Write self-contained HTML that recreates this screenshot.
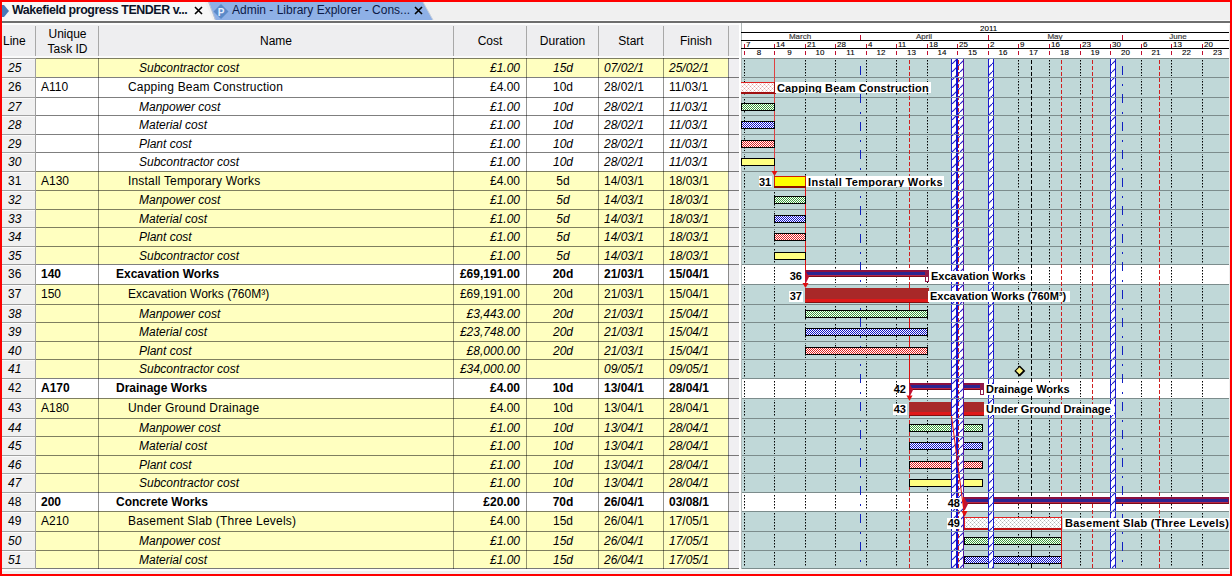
<!DOCTYPE html>
<html><head><meta charset="utf-8"><style>
*{margin:0;padding:0;box-sizing:border-box}
html,body{width:1232px;height:576px;overflow:hidden;background:#ff0000}
body{position:relative;font-family:"Liberation Sans",sans-serif;font-size:12px;color:#000}
.a{position:absolute}
.t{position:absolute;white-space:nowrap;line-height:14px;height:14px}
.i{font-style:italic}
.b{font-weight:bold}
.r{text-align:right}
.c{text-align:center}
.gl{position:absolute;background:#fff;font-weight:bold;font-size:11px;line-height:11px;height:11px;overflow:hidden;white-space:nowrap;color:#000}
.gh{position:absolute;font-size:8px;line-height:8px;white-space:nowrap;color:#000;-webkit-text-stroke:0.1px #000;font-family:"Liberation Sans",sans-serif}
</style></head><body>

<div class="a" style="left:2px;top:2px;width:1228px;height:572px;background:#f0f0f0"></div>
<div class="a" style="left:2px;top:2px;width:1228px;height:18px;background:#f0f0f0"></div>
<svg class="a" style="left:0;top:0" width="460" height="24" viewBox="0 0 460 24">
<polygon points="2,2 205,2 213,20 2,20" fill="#f7f7f7"/>
<polygon points="209,2 423,2 433,20 215,20" fill="#8eb0e6"/>
<line x1="208.5" y1="2" x2="215.5" y2="20" stroke="#b8c4d4" stroke-width="1"/>
<line x1="423" y1="2" x2="433" y2="20" stroke="#c8d0dc" stroke-width="1"/>
<polygon points="2,5 4,5 9,11 4,17 2,17" fill="#4a78b8"/>
<polygon points="221,4 228.5,11.5 221,19 213.5,11.5" fill="#5b8ac8"/>
<text x="221" y="15.5" font-family="Liberation Sans" font-size="10" font-weight="bold" fill="#e8f0ff" text-anchor="middle">P</text>
<path d="M195,7 L202,14 M202,7 L195,14" stroke="#000" stroke-width="1.6"/>
<path d="M415,7 L422,14 M422,7 L415,14" stroke="#000" stroke-width="1.6"/>
</svg>
<div class="t b" style="left:12px;top:3px;font-size:12.4px;letter-spacing:-0.42px;color:#0c1428">Wakefield progress TENDER v...</div>
<div class="t" style="left:232px;top:3px;font-size:12px;color:#0c1a48">Admin - Library Explorer - Cons...</div>
<div class="a" style="left:2px;top:20px;width:1228px;height:1px;background:#fafafa"></div>
<div class="a" style="left:2px;top:21px;width:1228px;height:2px;background:#6e6e6e"></div>
<div class="a" style="left:2px;top:23px;width:1228px;height:2px;background:#fcfcfc"></div>
<div class="a" style="left:2px;top:25px;width:737px;height:31px;background:#eeeef0"></div>
<div class="a" style="left:2px;top:56px;width:737px;height:2px;background:#fafafa"></div>
<div class="a" style="left:35px;top:26px;width:1px;height:30px;background:#a8a8a8"></div>
<div class="a" style="left:98px;top:26px;width:1px;height:30px;background:#a8a8a8"></div>
<div class="a" style="left:453px;top:26px;width:1px;height:30px;background:#a8a8a8"></div>
<div class="a" style="left:526px;top:26px;width:1px;height:30px;background:#a8a8a8"></div>
<div class="a" style="left:598px;top:26px;width:1px;height:30px;background:#a8a8a8"></div>
<div class="a" style="left:663px;top:26px;width:1px;height:30px;background:#a8a8a8"></div>
<div class="a" style="left:728px;top:26px;width:1px;height:30px;background:#a8a8a8"></div>
<div class="t" style="left:3px;top:34px">Line</div>
<div class="t c" style="left:37px;width:61px;top:27px">Unique</div>
<div class="t c" style="left:37px;width:61px;top:42px">Task ID</div>
<div class="t c" style="left:99px;width:354px;top:34px">Name</div>
<div class="t c" style="left:454px;width:72px;top:34px">Cost</div>
<div class="t c" style="left:527px;width:71px;top:34px">Duration</div>
<div class="t c" style="left:599px;width:64px;top:34px">Start</div>
<div class="t c" style="left:664px;width:64px;top:34px">Finish</div>
<div class="a" style="left:2px;top:58px;width:33px;height:19px;background:#f0f0f0"></div>
<div class="a" style="left:2px;top:59px;width:33px;height:1px;background:#fafafa"></div>
<div class="a" style="left:36px;top:58px;width:692px;height:19px;background:#ffffc0"></div>
<div class="a" style="left:729px;top:58px;width:10px;height:19px;background:#f0eff2"></div>
<div class="t i" style="left:8px;top:61px">25</div>
<div class="t i" style="left:139px;top:61px;letter-spacing:0px">Subcontractor cost</div>
<div class="t r i" style="left:454px;width:66px;top:61px">£1.00</div>
<div class="t c i" style="left:527px;width:72px;top:61px">15d</div>
<div class="t i" style="left:604px;top:61px">07/02/1</div>
<div class="t i" style="left:669px;top:61px">25/02/1</div>
<div class="a" style="left:2px;top:77px;width:33px;height:20px;background:#f0f0f0"></div>
<div class="a" style="left:2px;top:78px;width:33px;height:1px;background:#fafafa"></div>
<div class="a" style="left:36px;top:77px;width:692px;height:20px;background:#ffffff"></div>
<div class="a" style="left:729px;top:77px;width:10px;height:20px;background:#f0eff2"></div>
<div class="t " style="left:8px;top:80px">26</div>
<div class="t " style="left:41px;top:80px">A110</div>
<div class="t " style="left:128px;top:80px;letter-spacing:0.2px">Capping Beam Construction</div>
<div class="t r " style="left:454px;width:66px;top:80px">£4.00</div>
<div class="t c " style="left:527px;width:72px;top:80px">10d</div>
<div class="t " style="left:604px;top:80px">28/02/1</div>
<div class="t " style="left:669px;top:80px">11/03/1</div>
<div class="a" style="left:2px;top:97px;width:33px;height:18px;background:#f0f0f0"></div>
<div class="a" style="left:2px;top:98px;width:33px;height:1px;background:#fafafa"></div>
<div class="a" style="left:36px;top:97px;width:692px;height:18px;background:#ffffff"></div>
<div class="a" style="left:729px;top:97px;width:10px;height:18px;background:#f0eff2"></div>
<div class="t i" style="left:8px;top:100px">27</div>
<div class="t i" style="left:139px;top:100px;letter-spacing:0px">Manpower cost</div>
<div class="t r i" style="left:454px;width:66px;top:100px">£1.00</div>
<div class="t c i" style="left:527px;width:72px;top:100px">10d</div>
<div class="t i" style="left:604px;top:100px">28/02/1</div>
<div class="t i" style="left:669px;top:100px">11/03/1</div>
<div class="a" style="left:2px;top:115px;width:33px;height:19px;background:#f0f0f0"></div>
<div class="a" style="left:2px;top:116px;width:33px;height:1px;background:#fafafa"></div>
<div class="a" style="left:36px;top:115px;width:692px;height:19px;background:#ffffff"></div>
<div class="a" style="left:729px;top:115px;width:10px;height:19px;background:#f0eff2"></div>
<div class="t i" style="left:8px;top:118px">28</div>
<div class="t i" style="left:139px;top:118px;letter-spacing:0px">Material cost</div>
<div class="t r i" style="left:454px;width:66px;top:118px">£1.00</div>
<div class="t c i" style="left:527px;width:72px;top:118px">10d</div>
<div class="t i" style="left:604px;top:118px">28/02/1</div>
<div class="t i" style="left:669px;top:118px">11/03/1</div>
<div class="a" style="left:2px;top:134px;width:33px;height:18px;background:#f0f0f0"></div>
<div class="a" style="left:2px;top:135px;width:33px;height:1px;background:#fafafa"></div>
<div class="a" style="left:36px;top:134px;width:692px;height:18px;background:#ffffff"></div>
<div class="a" style="left:729px;top:134px;width:10px;height:18px;background:#f0eff2"></div>
<div class="t i" style="left:8px;top:137px">29</div>
<div class="t i" style="left:139px;top:137px;letter-spacing:0px">Plant cost</div>
<div class="t r i" style="left:454px;width:66px;top:137px">£1.00</div>
<div class="t c i" style="left:527px;width:72px;top:137px">10d</div>
<div class="t i" style="left:604px;top:137px">28/02/1</div>
<div class="t i" style="left:669px;top:137px">11/03/1</div>
<div class="a" style="left:2px;top:152px;width:33px;height:19px;background:#f0f0f0"></div>
<div class="a" style="left:2px;top:153px;width:33px;height:1px;background:#fafafa"></div>
<div class="a" style="left:36px;top:152px;width:692px;height:19px;background:#ffffff"></div>
<div class="a" style="left:729px;top:152px;width:10px;height:19px;background:#f0eff2"></div>
<div class="t i" style="left:8px;top:155px">30</div>
<div class="t i" style="left:139px;top:155px;letter-spacing:0px">Subcontractor cost</div>
<div class="t r i" style="left:454px;width:66px;top:155px">£1.00</div>
<div class="t c i" style="left:527px;width:72px;top:155px">10d</div>
<div class="t i" style="left:604px;top:155px">28/02/1</div>
<div class="t i" style="left:669px;top:155px">11/03/1</div>
<div class="a" style="left:2px;top:171px;width:33px;height:19px;background:#f0f0f0"></div>
<div class="a" style="left:2px;top:172px;width:33px;height:1px;background:#fafafa"></div>
<div class="a" style="left:36px;top:171px;width:692px;height:19px;background:#ffffc0"></div>
<div class="a" style="left:729px;top:171px;width:10px;height:19px;background:#f0eff2"></div>
<div class="t " style="left:8px;top:174px">31</div>
<div class="t " style="left:41px;top:174px">A130</div>
<div class="t " style="left:128px;top:174px;letter-spacing:0.18px">Install Temporary Works</div>
<div class="t r " style="left:454px;width:66px;top:174px">£4.00</div>
<div class="t c " style="left:527px;width:72px;top:174px">5d</div>
<div class="t " style="left:604px;top:174px">14/03/1</div>
<div class="t " style="left:669px;top:174px">18/03/1</div>
<div class="a" style="left:2px;top:190px;width:33px;height:19px;background:#f0f0f0"></div>
<div class="a" style="left:2px;top:191px;width:33px;height:1px;background:#fafafa"></div>
<div class="a" style="left:36px;top:190px;width:692px;height:19px;background:#ffffc0"></div>
<div class="a" style="left:729px;top:190px;width:10px;height:19px;background:#f0eff2"></div>
<div class="t i" style="left:8px;top:193px">32</div>
<div class="t i" style="left:139px;top:193px;letter-spacing:0px">Manpower cost</div>
<div class="t r i" style="left:454px;width:66px;top:193px">£1.00</div>
<div class="t c i" style="left:527px;width:72px;top:193px">5d</div>
<div class="t i" style="left:604px;top:193px">14/03/1</div>
<div class="t i" style="left:669px;top:193px">18/03/1</div>
<div class="a" style="left:2px;top:209px;width:33px;height:18px;background:#f0f0f0"></div>
<div class="a" style="left:2px;top:210px;width:33px;height:1px;background:#fafafa"></div>
<div class="a" style="left:36px;top:209px;width:692px;height:18px;background:#ffffc0"></div>
<div class="a" style="left:729px;top:209px;width:10px;height:18px;background:#f0eff2"></div>
<div class="t i" style="left:8px;top:212px">33</div>
<div class="t i" style="left:139px;top:212px;letter-spacing:0px">Material cost</div>
<div class="t r i" style="left:454px;width:66px;top:212px">£1.00</div>
<div class="t c i" style="left:527px;width:72px;top:212px">5d</div>
<div class="t i" style="left:604px;top:212px">14/03/1</div>
<div class="t i" style="left:669px;top:212px">18/03/1</div>
<div class="a" style="left:2px;top:227px;width:33px;height:19px;background:#f0f0f0"></div>
<div class="a" style="left:2px;top:228px;width:33px;height:1px;background:#fafafa"></div>
<div class="a" style="left:36px;top:227px;width:692px;height:19px;background:#ffffc0"></div>
<div class="a" style="left:729px;top:227px;width:10px;height:19px;background:#f0eff2"></div>
<div class="t i" style="left:8px;top:230px">34</div>
<div class="t i" style="left:139px;top:230px;letter-spacing:0px">Plant cost</div>
<div class="t r i" style="left:454px;width:66px;top:230px">£1.00</div>
<div class="t c i" style="left:527px;width:72px;top:230px">5d</div>
<div class="t i" style="left:604px;top:230px">14/03/1</div>
<div class="t i" style="left:669px;top:230px">18/03/1</div>
<div class="a" style="left:2px;top:246px;width:33px;height:18px;background:#f0f0f0"></div>
<div class="a" style="left:2px;top:247px;width:33px;height:1px;background:#fafafa"></div>
<div class="a" style="left:36px;top:246px;width:692px;height:18px;background:#ffffc0"></div>
<div class="a" style="left:729px;top:246px;width:10px;height:18px;background:#f0eff2"></div>
<div class="t i" style="left:8px;top:249px">35</div>
<div class="t i" style="left:139px;top:249px;letter-spacing:0px">Subcontractor cost</div>
<div class="t r i" style="left:454px;width:66px;top:249px">£1.00</div>
<div class="t c i" style="left:527px;width:72px;top:249px">5d</div>
<div class="t i" style="left:604px;top:249px">14/03/1</div>
<div class="t i" style="left:669px;top:249px">18/03/1</div>
<div class="a" style="left:2px;top:264px;width:33px;height:20px;background:#f0f0f0"></div>
<div class="a" style="left:2px;top:265px;width:33px;height:1px;background:#fafafa"></div>
<div class="a" style="left:36px;top:264px;width:692px;height:20px;background:#ffffff"></div>
<div class="a" style="left:729px;top:264px;width:10px;height:20px;background:#f0eff2"></div>
<div class="t " style="left:8px;top:267px">36</div>
<div class="t b" style="left:41px;top:267px">140</div>
<div class="t b" style="left:116px;top:267px;letter-spacing:0px">Excavation Works</div>
<div class="t r b" style="left:454px;width:66px;top:267px">£69,191.00</div>
<div class="t c b" style="left:527px;width:72px;top:267px">20d</div>
<div class="t b" style="left:604px;top:267px">21/03/1</div>
<div class="t b" style="left:669px;top:267px">15/04/1</div>
<div class="a" style="left:2px;top:284px;width:33px;height:20px;background:#f0f0f0"></div>
<div class="a" style="left:2px;top:285px;width:33px;height:1px;background:#fafafa"></div>
<div class="a" style="left:36px;top:284px;width:692px;height:20px;background:#ffffc0"></div>
<div class="a" style="left:729px;top:284px;width:10px;height:20px;background:#f0eff2"></div>
<div class="t " style="left:8px;top:287px">37</div>
<div class="t " style="left:41px;top:287px">150</div>
<div class="t " style="left:128px;top:287px;letter-spacing:0px">Excavation Works (760M³)</div>
<div class="t r " style="left:454px;width:66px;top:287px">£69,191.00</div>
<div class="t c " style="left:527px;width:72px;top:287px">20d</div>
<div class="t " style="left:604px;top:287px">21/03/1</div>
<div class="t " style="left:669px;top:287px">15/04/1</div>
<div class="a" style="left:2px;top:304px;width:33px;height:18px;background:#f0f0f0"></div>
<div class="a" style="left:2px;top:305px;width:33px;height:1px;background:#fafafa"></div>
<div class="a" style="left:36px;top:304px;width:692px;height:18px;background:#ffffc0"></div>
<div class="a" style="left:729px;top:304px;width:10px;height:18px;background:#f0eff2"></div>
<div class="t i" style="left:8px;top:307px">38</div>
<div class="t i" style="left:139px;top:307px;letter-spacing:0px">Manpower cost</div>
<div class="t r i" style="left:454px;width:66px;top:307px">£3,443.00</div>
<div class="t c i" style="left:527px;width:72px;top:307px">20d</div>
<div class="t i" style="left:604px;top:307px">21/03/1</div>
<div class="t i" style="left:669px;top:307px">15/04/1</div>
<div class="a" style="left:2px;top:322px;width:33px;height:19px;background:#f0f0f0"></div>
<div class="a" style="left:2px;top:323px;width:33px;height:1px;background:#fafafa"></div>
<div class="a" style="left:36px;top:322px;width:692px;height:19px;background:#ffffc0"></div>
<div class="a" style="left:729px;top:322px;width:10px;height:19px;background:#f0eff2"></div>
<div class="t i" style="left:8px;top:325px">39</div>
<div class="t i" style="left:139px;top:325px;letter-spacing:0px">Material cost</div>
<div class="t r i" style="left:454px;width:66px;top:325px">£23,748.00</div>
<div class="t c i" style="left:527px;width:72px;top:325px">20d</div>
<div class="t i" style="left:604px;top:325px">21/03/1</div>
<div class="t i" style="left:669px;top:325px">15/04/1</div>
<div class="a" style="left:2px;top:341px;width:33px;height:18px;background:#f0f0f0"></div>
<div class="a" style="left:2px;top:342px;width:33px;height:1px;background:#fafafa"></div>
<div class="a" style="left:36px;top:341px;width:692px;height:18px;background:#ffffc0"></div>
<div class="a" style="left:729px;top:341px;width:10px;height:18px;background:#f0eff2"></div>
<div class="t i" style="left:8px;top:344px">40</div>
<div class="t i" style="left:139px;top:344px;letter-spacing:0px">Plant cost</div>
<div class="t r i" style="left:454px;width:66px;top:344px">£8,000.00</div>
<div class="t c i" style="left:527px;width:72px;top:344px">20d</div>
<div class="t i" style="left:604px;top:344px">21/03/1</div>
<div class="t i" style="left:669px;top:344px">15/04/1</div>
<div class="a" style="left:2px;top:359px;width:33px;height:19px;background:#f0f0f0"></div>
<div class="a" style="left:2px;top:360px;width:33px;height:1px;background:#fafafa"></div>
<div class="a" style="left:36px;top:359px;width:692px;height:19px;background:#ffffc0"></div>
<div class="a" style="left:729px;top:359px;width:10px;height:19px;background:#f0eff2"></div>
<div class="t i" style="left:8px;top:362px">41</div>
<div class="t i" style="left:139px;top:362px;letter-spacing:0px">Subcontractor cost</div>
<div class="t r i" style="left:454px;width:66px;top:362px">£34,000.00</div>
<div class="t i" style="left:604px;top:362px">09/05/1</div>
<div class="t i" style="left:669px;top:362px">09/05/1</div>
<div class="a" style="left:2px;top:378px;width:33px;height:20px;background:#f0f0f0"></div>
<div class="a" style="left:2px;top:379px;width:33px;height:1px;background:#fafafa"></div>
<div class="a" style="left:36px;top:378px;width:692px;height:20px;background:#ffffff"></div>
<div class="a" style="left:729px;top:378px;width:10px;height:20px;background:#f0eff2"></div>
<div class="t " style="left:8px;top:381px">42</div>
<div class="t b" style="left:41px;top:381px">A170</div>
<div class="t b" style="left:116px;top:381px;letter-spacing:0px">Drainage Works</div>
<div class="t r b" style="left:454px;width:66px;top:381px">£4.00</div>
<div class="t c b" style="left:527px;width:72px;top:381px">10d</div>
<div class="t b" style="left:604px;top:381px">13/04/1</div>
<div class="t b" style="left:669px;top:381px">28/04/1</div>
<div class="a" style="left:2px;top:398px;width:33px;height:20px;background:#f0f0f0"></div>
<div class="a" style="left:2px;top:399px;width:33px;height:1px;background:#fafafa"></div>
<div class="a" style="left:36px;top:398px;width:692px;height:20px;background:#ffffc0"></div>
<div class="a" style="left:729px;top:398px;width:10px;height:20px;background:#f0eff2"></div>
<div class="t " style="left:8px;top:401px">43</div>
<div class="t " style="left:41px;top:401px">A180</div>
<div class="t " style="left:128px;top:401px;letter-spacing:0.15px">Under Ground Drainage</div>
<div class="t r " style="left:454px;width:66px;top:401px">£4.00</div>
<div class="t c " style="left:527px;width:72px;top:401px">10d</div>
<div class="t " style="left:604px;top:401px">13/04/1</div>
<div class="t " style="left:669px;top:401px">28/04/1</div>
<div class="a" style="left:2px;top:418px;width:33px;height:18px;background:#f0f0f0"></div>
<div class="a" style="left:2px;top:419px;width:33px;height:1px;background:#fafafa"></div>
<div class="a" style="left:36px;top:418px;width:692px;height:18px;background:#ffffc0"></div>
<div class="a" style="left:729px;top:418px;width:10px;height:18px;background:#f0eff2"></div>
<div class="t i" style="left:8px;top:421px">44</div>
<div class="t i" style="left:139px;top:421px;letter-spacing:0px">Manpower cost</div>
<div class="t r i" style="left:454px;width:66px;top:421px">£1.00</div>
<div class="t c i" style="left:527px;width:72px;top:421px">10d</div>
<div class="t i" style="left:604px;top:421px">13/04/1</div>
<div class="t i" style="left:669px;top:421px">28/04/1</div>
<div class="a" style="left:2px;top:436px;width:33px;height:19px;background:#f0f0f0"></div>
<div class="a" style="left:2px;top:437px;width:33px;height:1px;background:#fafafa"></div>
<div class="a" style="left:36px;top:436px;width:692px;height:19px;background:#ffffc0"></div>
<div class="a" style="left:729px;top:436px;width:10px;height:19px;background:#f0eff2"></div>
<div class="t i" style="left:8px;top:439px">45</div>
<div class="t i" style="left:139px;top:439px;letter-spacing:0px">Material cost</div>
<div class="t r i" style="left:454px;width:66px;top:439px">£1.00</div>
<div class="t c i" style="left:527px;width:72px;top:439px">10d</div>
<div class="t i" style="left:604px;top:439px">13/04/1</div>
<div class="t i" style="left:669px;top:439px">28/04/1</div>
<div class="a" style="left:2px;top:455px;width:33px;height:18px;background:#f0f0f0"></div>
<div class="a" style="left:2px;top:456px;width:33px;height:1px;background:#fafafa"></div>
<div class="a" style="left:36px;top:455px;width:692px;height:18px;background:#ffffc0"></div>
<div class="a" style="left:729px;top:455px;width:10px;height:18px;background:#f0eff2"></div>
<div class="t i" style="left:8px;top:458px">46</div>
<div class="t i" style="left:139px;top:458px;letter-spacing:0px">Plant cost</div>
<div class="t r i" style="left:454px;width:66px;top:458px">£1.00</div>
<div class="t c i" style="left:527px;width:72px;top:458px">10d</div>
<div class="t i" style="left:604px;top:458px">13/04/1</div>
<div class="t i" style="left:669px;top:458px">28/04/1</div>
<div class="a" style="left:2px;top:473px;width:33px;height:19px;background:#f0f0f0"></div>
<div class="a" style="left:2px;top:474px;width:33px;height:1px;background:#fafafa"></div>
<div class="a" style="left:36px;top:473px;width:692px;height:19px;background:#ffffc0"></div>
<div class="a" style="left:729px;top:473px;width:10px;height:19px;background:#f0eff2"></div>
<div class="t i" style="left:8px;top:476px">47</div>
<div class="t i" style="left:139px;top:476px;letter-spacing:0px">Subcontractor cost</div>
<div class="t r i" style="left:454px;width:66px;top:476px">£1.00</div>
<div class="t c i" style="left:527px;width:72px;top:476px">10d</div>
<div class="t i" style="left:604px;top:476px">13/04/1</div>
<div class="t i" style="left:669px;top:476px">28/04/1</div>
<div class="a" style="left:2px;top:492px;width:33px;height:19px;background:#f0f0f0"></div>
<div class="a" style="left:2px;top:493px;width:33px;height:1px;background:#fafafa"></div>
<div class="a" style="left:36px;top:492px;width:692px;height:19px;background:#ffffff"></div>
<div class="a" style="left:729px;top:492px;width:10px;height:19px;background:#f0eff2"></div>
<div class="t " style="left:8px;top:495px">48</div>
<div class="t b" style="left:41px;top:495px">200</div>
<div class="t b" style="left:116px;top:495px;letter-spacing:0px">Concrete Works</div>
<div class="t r b" style="left:454px;width:66px;top:495px">£20.00</div>
<div class="t c b" style="left:527px;width:72px;top:495px">70d</div>
<div class="t b" style="left:604px;top:495px">26/04/1</div>
<div class="t b" style="left:669px;top:495px">03/08/1</div>
<div class="a" style="left:2px;top:511px;width:33px;height:20px;background:#f0f0f0"></div>
<div class="a" style="left:2px;top:512px;width:33px;height:1px;background:#fafafa"></div>
<div class="a" style="left:36px;top:511px;width:692px;height:20px;background:#ffffc0"></div>
<div class="a" style="left:729px;top:511px;width:10px;height:20px;background:#f0eff2"></div>
<div class="t " style="left:8px;top:514px">49</div>
<div class="t " style="left:41px;top:514px">A210</div>
<div class="t " style="left:128px;top:514px;letter-spacing:0.22px">Basement Slab (Three Levels)</div>
<div class="t r " style="left:454px;width:66px;top:514px">£4.00</div>
<div class="t c " style="left:527px;width:72px;top:514px">15d</div>
<div class="t " style="left:604px;top:514px">26/04/1</div>
<div class="t " style="left:669px;top:514px">17/05/1</div>
<div class="a" style="left:2px;top:531px;width:33px;height:19px;background:#f0f0f0"></div>
<div class="a" style="left:2px;top:532px;width:33px;height:1px;background:#fafafa"></div>
<div class="a" style="left:36px;top:531px;width:692px;height:19px;background:#ffffc0"></div>
<div class="a" style="left:729px;top:531px;width:10px;height:19px;background:#f0eff2"></div>
<div class="t i" style="left:8px;top:534px">50</div>
<div class="t i" style="left:139px;top:534px;letter-spacing:0px">Manpower cost</div>
<div class="t r i" style="left:454px;width:66px;top:534px">£1.00</div>
<div class="t c i" style="left:527px;width:72px;top:534px">15d</div>
<div class="t i" style="left:604px;top:534px">26/04/1</div>
<div class="t i" style="left:669px;top:534px">17/05/1</div>
<div class="a" style="left:2px;top:550px;width:33px;height:18px;background:#f0f0f0"></div>
<div class="a" style="left:2px;top:551px;width:33px;height:1px;background:#fafafa"></div>
<div class="a" style="left:36px;top:550px;width:692px;height:18px;background:#ffffc0"></div>
<div class="a" style="left:729px;top:550px;width:10px;height:18px;background:#f0eff2"></div>
<div class="t i" style="left:8px;top:553px">51</div>
<div class="t i" style="left:139px;top:553px;letter-spacing:0px">Material cost</div>
<div class="t r i" style="left:454px;width:66px;top:553px">£1.00</div>
<div class="t c i" style="left:527px;width:72px;top:553px">15d</div>
<div class="t i" style="left:604px;top:553px">26/04/1</div>
<div class="t i" style="left:669px;top:553px">17/05/1</div>
<div class="a" style="left:2px;top:58px;width:33px;height:1px;background:#a0a0a0"></div>
<div class="a" style="left:36px;top:58px;width:703px;height:1px;background:rgba(0,0,0,0.5)"></div>
<div class="a" style="left:2px;top:77px;width:33px;height:1px;background:#a0a0a0"></div>
<div class="a" style="left:36px;top:77px;width:703px;height:1px;background:rgba(0,0,0,0.5)"></div>
<div class="a" style="left:2px;top:97px;width:33px;height:1px;background:#a0a0a0"></div>
<div class="a" style="left:36px;top:97px;width:703px;height:1px;background:rgba(0,0,0,0.5)"></div>
<div class="a" style="left:2px;top:115px;width:33px;height:1px;background:#a0a0a0"></div>
<div class="a" style="left:36px;top:115px;width:703px;height:1px;background:rgba(0,0,0,0.5)"></div>
<div class="a" style="left:2px;top:134px;width:33px;height:1px;background:#a0a0a0"></div>
<div class="a" style="left:36px;top:134px;width:703px;height:1px;background:rgba(0,0,0,0.5)"></div>
<div class="a" style="left:2px;top:152px;width:33px;height:1px;background:#a0a0a0"></div>
<div class="a" style="left:36px;top:152px;width:703px;height:1px;background:rgba(0,0,0,0.5)"></div>
<div class="a" style="left:2px;top:171px;width:33px;height:1px;background:#a0a0a0"></div>
<div class="a" style="left:36px;top:171px;width:703px;height:1px;background:rgba(0,0,0,0.5)"></div>
<div class="a" style="left:2px;top:190px;width:33px;height:1px;background:#a0a0a0"></div>
<div class="a" style="left:36px;top:190px;width:703px;height:1px;background:rgba(0,0,0,0.5)"></div>
<div class="a" style="left:2px;top:209px;width:33px;height:1px;background:#a0a0a0"></div>
<div class="a" style="left:36px;top:209px;width:703px;height:1px;background:rgba(0,0,0,0.5)"></div>
<div class="a" style="left:2px;top:227px;width:33px;height:1px;background:#a0a0a0"></div>
<div class="a" style="left:36px;top:227px;width:703px;height:1px;background:rgba(0,0,0,0.5)"></div>
<div class="a" style="left:2px;top:246px;width:33px;height:1px;background:#a0a0a0"></div>
<div class="a" style="left:36px;top:246px;width:703px;height:1px;background:rgba(0,0,0,0.5)"></div>
<div class="a" style="left:2px;top:264px;width:33px;height:1px;background:#a0a0a0"></div>
<div class="a" style="left:36px;top:264px;width:703px;height:1px;background:rgba(0,0,0,0.5)"></div>
<div class="a" style="left:2px;top:284px;width:33px;height:1px;background:#a0a0a0"></div>
<div class="a" style="left:36px;top:284px;width:703px;height:1px;background:rgba(0,0,0,0.5)"></div>
<div class="a" style="left:2px;top:304px;width:33px;height:1px;background:#a0a0a0"></div>
<div class="a" style="left:36px;top:304px;width:703px;height:1px;background:rgba(0,0,0,0.5)"></div>
<div class="a" style="left:2px;top:322px;width:33px;height:1px;background:#a0a0a0"></div>
<div class="a" style="left:36px;top:322px;width:703px;height:1px;background:rgba(0,0,0,0.5)"></div>
<div class="a" style="left:2px;top:341px;width:33px;height:1px;background:#a0a0a0"></div>
<div class="a" style="left:36px;top:341px;width:703px;height:1px;background:rgba(0,0,0,0.5)"></div>
<div class="a" style="left:2px;top:359px;width:33px;height:1px;background:#a0a0a0"></div>
<div class="a" style="left:36px;top:359px;width:703px;height:1px;background:rgba(0,0,0,0.5)"></div>
<div class="a" style="left:2px;top:378px;width:33px;height:1px;background:#a0a0a0"></div>
<div class="a" style="left:36px;top:378px;width:703px;height:1px;background:rgba(0,0,0,0.5)"></div>
<div class="a" style="left:2px;top:398px;width:33px;height:1px;background:#a0a0a0"></div>
<div class="a" style="left:36px;top:398px;width:703px;height:1px;background:rgba(0,0,0,0.5)"></div>
<div class="a" style="left:2px;top:418px;width:33px;height:1px;background:#a0a0a0"></div>
<div class="a" style="left:36px;top:418px;width:703px;height:1px;background:rgba(0,0,0,0.5)"></div>
<div class="a" style="left:2px;top:436px;width:33px;height:1px;background:#a0a0a0"></div>
<div class="a" style="left:36px;top:436px;width:703px;height:1px;background:rgba(0,0,0,0.5)"></div>
<div class="a" style="left:2px;top:455px;width:33px;height:1px;background:#a0a0a0"></div>
<div class="a" style="left:36px;top:455px;width:703px;height:1px;background:rgba(0,0,0,0.5)"></div>
<div class="a" style="left:2px;top:473px;width:33px;height:1px;background:#a0a0a0"></div>
<div class="a" style="left:36px;top:473px;width:703px;height:1px;background:rgba(0,0,0,0.5)"></div>
<div class="a" style="left:2px;top:492px;width:33px;height:1px;background:#a0a0a0"></div>
<div class="a" style="left:36px;top:492px;width:703px;height:1px;background:rgba(0,0,0,0.5)"></div>
<div class="a" style="left:2px;top:511px;width:33px;height:1px;background:#a0a0a0"></div>
<div class="a" style="left:36px;top:511px;width:703px;height:1px;background:rgba(0,0,0,0.5)"></div>
<div class="a" style="left:2px;top:531px;width:33px;height:1px;background:#a0a0a0"></div>
<div class="a" style="left:36px;top:531px;width:703px;height:1px;background:rgba(0,0,0,0.5)"></div>
<div class="a" style="left:2px;top:550px;width:33px;height:1px;background:#a0a0a0"></div>
<div class="a" style="left:36px;top:550px;width:703px;height:1px;background:rgba(0,0,0,0.5)"></div>
<div class="a" style="left:2px;top:568px;width:33px;height:1px;background:#a0a0a0"></div>
<div class="a" style="left:36px;top:568px;width:703px;height:1px;background:rgba(0,0,0,0.5)"></div>
<div class="a" style="left:98px;top:58px;width:1px;height:511px;background:rgba(0,0,0,0.42)"></div>
<div class="a" style="left:453px;top:58px;width:1px;height:511px;background:rgba(0,0,0,0.42)"></div>
<div class="a" style="left:526px;top:58px;width:1px;height:511px;background:rgba(0,0,0,0.42)"></div>
<div class="a" style="left:598px;top:58px;width:1px;height:511px;background:rgba(0,0,0,0.42)"></div>
<div class="a" style="left:663px;top:58px;width:1px;height:511px;background:rgba(0,0,0,0.42)"></div>
<div class="a" style="left:728px;top:58px;width:1px;height:511px;background:rgba(0,0,0,0.42)"></div>
<div class="a" style="left:35px;top:58px;width:1px;height:511px;background:#a0a0a0"></div>
<div class="a" style="left:2px;top:569px;width:1228px;height:2px;background:#fcfcfc"></div>
<svg class="a" style="left:0;top:0" width="1232" height="576" viewBox="0 0 1232 576" shape-rendering="crispEdges">
<defs>
<pattern id="pg" width="2" height="2" patternUnits="userSpaceOnUse"><rect width="2" height="2" fill="#ffffff"/><rect width="1" height="1" fill="#3c9c3c"/><rect x="1" y="1" width="1" height="1" fill="#3c9c3c"/></pattern>
<pattern id="pb" width="2" height="2" patternUnits="userSpaceOnUse"><rect width="2" height="2" fill="#ffffff"/><rect width="1" height="1" fill="#1010c8"/><rect x="1" y="1" width="1" height="1" fill="#1010c8"/></pattern>
<pattern id="pr" width="2" height="2" patternUnits="userSpaceOnUse"><rect width="2" height="2" fill="#ffffff"/><rect width="1" height="1" fill="#e02020"/><rect x="1" y="1" width="1" height="1" fill="#e02020"/></pattern>
<pattern id="pw" width="4" height="4" patternUnits="userSpaceOnUse"><rect width="4" height="4" fill="#ffffff"/><rect width="1" height="1" fill="#e0a0a0"/><rect x="2" y="2" width="1" height="1" fill="#e0a0a0"/><rect x="1" y="1" width="1" height="1" fill="#f4d8d8"/><rect x="3" y="1" width="1" height="1" fill="#f4d8d8"/><rect x="1" y="3" width="1" height="1" fill="#f4d8d8"/><rect x="3" y="3" width="1" height="1" fill="#f4d8d8"/></pattern>
<pattern id="pgr" width="4" height="4" patternUnits="userSpaceOnUse"><rect width="4" height="4" fill="#ffffff"/><rect width="1" height="1" fill="#b0b0b0"/><rect x="2" y="2" width="1" height="1" fill="#b0b0b0"/><rect x="1" y="1" width="1" height="1" fill="#e0e0e0"/><rect x="3" y="1" width="1" height="1" fill="#e0e0e0"/><rect x="1" y="3" width="1" height="1" fill="#e0e0e0"/><rect x="3" y="3" width="1" height="1" fill="#e0e0e0"/></pattern>
<pattern id="hatch" width="8" height="8" patternUnits="userSpaceOnUse"><rect width="8" height="8" fill="#ffffff"/><path d="M-1,9 L9,-1" stroke="#1a1ac8" stroke-width="1.1" shape-rendering="geometricPrecision"/></pattern>
<pattern id="dot" width="1" height="3" patternUnits="userSpaceOnUse"><rect width="1" height="1" fill="#000"/><rect y="1" width="1" height="1" fill="rgba(0,0,0,0.5)"/></pattern>
<pattern id="rdash" width="1" height="6" patternUnits="userSpaceOnUse"><rect width="1" height="4" fill="#d02020"/></pattern>
<pattern id="bdashdot" width="1" height="28" y="66" patternUnits="userSpaceOnUse"><rect width="1" height="9" fill="#1020c0"/><rect y="18" width="1" height="2" fill="#1020c0"/></pattern>
<pattern id="kdash" width="1" height="6" patternUnits="userSpaceOnUse"><rect width="1" height="4" fill="#000"/></pattern>
</defs>
<rect x="739" y="23" width="2" height="548" fill="#ffffff"/>
<rect x="741" y="23" width="488" height="35" fill="#ffffff"/>
<rect x="741" y="23" width="1" height="546" fill="#b0b8b8"/>
<rect x="741" y="32" width="488" height="1" fill="#000"/>
<rect x="741" y="40" width="488" height="1" fill="#000"/>
<rect x="741" y="48" width="488" height="1" fill="#000"/>
<rect x="742" y="58" width="487" height="19" fill="#c0d8d8"/>
<rect x="742" y="77" width="487" height="20" fill="#c0d8d8"/>
<rect x="742" y="97" width="487" height="18" fill="#c0d8d8"/>
<rect x="742" y="115" width="487" height="19" fill="#c0d8d8"/>
<rect x="742" y="134" width="487" height="18" fill="#c0d8d8"/>
<rect x="742" y="152" width="487" height="19" fill="#c0d8d8"/>
<rect x="742" y="171" width="487" height="19" fill="#c0d8d8"/>
<rect x="742" y="190" width="487" height="19" fill="#c0d8d8"/>
<rect x="742" y="209" width="487" height="18" fill="#c0d8d8"/>
<rect x="742" y="227" width="487" height="19" fill="#c0d8d8"/>
<rect x="742" y="246" width="487" height="18" fill="#c0d8d8"/>
<rect x="742" y="264" width="487" height="20" fill="#ffffff"/>
<rect x="742" y="284" width="487" height="20" fill="#c0d8d8"/>
<rect x="742" y="304" width="487" height="18" fill="#c0d8d8"/>
<rect x="742" y="322" width="487" height="19" fill="#c0d8d8"/>
<rect x="742" y="341" width="487" height="18" fill="#c0d8d8"/>
<rect x="742" y="359" width="487" height="19" fill="#c0d8d8"/>
<rect x="742" y="378" width="487" height="20" fill="#ffffff"/>
<rect x="742" y="398" width="487" height="20" fill="#c0d8d8"/>
<rect x="742" y="418" width="487" height="18" fill="#c0d8d8"/>
<rect x="742" y="436" width="487" height="19" fill="#c0d8d8"/>
<rect x="742" y="455" width="487" height="18" fill="#c0d8d8"/>
<rect x="742" y="473" width="487" height="19" fill="#c0d8d8"/>
<rect x="742" y="492" width="487" height="19" fill="#ffffff"/>
<rect x="742" y="511" width="487" height="20" fill="#c0d8d8"/>
<rect x="742" y="531" width="487" height="19" fill="#c0d8d8"/>
<rect x="742" y="550" width="487" height="18" fill="#c0d8d8"/>
<rect x="742" y="58" width="487" height="1" fill="#7c8c8c"/>
<rect x="742" y="77" width="487" height="1" fill="#7c8c8c"/>
<rect x="742" y="97" width="487" height="1" fill="#7c8c8c"/>
<rect x="742" y="115" width="487" height="1" fill="#7c8c8c"/>
<rect x="742" y="134" width="487" height="1" fill="#7c8c8c"/>
<rect x="742" y="152" width="487" height="1" fill="#7c8c8c"/>
<rect x="742" y="171" width="487" height="1" fill="#7c8c8c"/>
<rect x="742" y="190" width="487" height="1" fill="#7c8c8c"/>
<rect x="742" y="209" width="487" height="1" fill="#7c8c8c"/>
<rect x="742" y="227" width="487" height="1" fill="#7c8c8c"/>
<rect x="742" y="246" width="487" height="1" fill="#7c8c8c"/>
<rect x="742" y="264" width="487" height="1" fill="#7c8c8c"/>
<rect x="742" y="284" width="487" height="1" fill="#7c8c8c"/>
<rect x="742" y="304" width="487" height="1" fill="#7c8c8c"/>
<rect x="742" y="322" width="487" height="1" fill="#7c8c8c"/>
<rect x="742" y="341" width="487" height="1" fill="#7c8c8c"/>
<rect x="742" y="359" width="487" height="1" fill="#7c8c8c"/>
<rect x="742" y="378" width="487" height="1" fill="#7c8c8c"/>
<rect x="742" y="398" width="487" height="1" fill="#7c8c8c"/>
<rect x="742" y="418" width="487" height="1" fill="#7c8c8c"/>
<rect x="742" y="436" width="487" height="1" fill="#7c8c8c"/>
<rect x="742" y="455" width="487" height="1" fill="#7c8c8c"/>
<rect x="742" y="473" width="487" height="1" fill="#7c8c8c"/>
<rect x="742" y="492" width="487" height="1" fill="#7c8c8c"/>
<rect x="742" y="511" width="487" height="1" fill="#7c8c8c"/>
<rect x="742" y="531" width="487" height="1" fill="#7c8c8c"/>
<rect x="742" y="550" width="487" height="1" fill="#7c8c8c"/>
<rect x="742" y="568" width="487" height="1" fill="#7c8c8c"/>
<rect x="744" y="44" width="1" height="4" fill="#c01030"/>
<rect x="744" y="51" width="1" height="4" fill="#c01030"/>
<rect x="774" y="44" width="1" height="4" fill="#c01030"/>
<rect x="774" y="51" width="1" height="4" fill="#c01030"/>
<rect x="805" y="44" width="1" height="4" fill="#c01030"/>
<rect x="805" y="51" width="1" height="4" fill="#c01030"/>
<rect x="835" y="44" width="1" height="4" fill="#c01030"/>
<rect x="835" y="51" width="1" height="4" fill="#c01030"/>
<rect x="866" y="44" width="1" height="4" fill="#c01030"/>
<rect x="866" y="51" width="1" height="4" fill="#c01030"/>
<rect x="896" y="44" width="1" height="4" fill="#c01030"/>
<rect x="896" y="51" width="1" height="4" fill="#c01030"/>
<rect x="927" y="44" width="1" height="4" fill="#c01030"/>
<rect x="927" y="51" width="1" height="4" fill="#c01030"/>
<rect x="957" y="44" width="1" height="4" fill="#c01030"/>
<rect x="957" y="51" width="1" height="4" fill="#c01030"/>
<rect x="988" y="44" width="1" height="4" fill="#c01030"/>
<rect x="988" y="51" width="1" height="4" fill="#c01030"/>
<rect x="1018" y="44" width="1" height="4" fill="#c01030"/>
<rect x="1018" y="51" width="1" height="4" fill="#c01030"/>
<rect x="1049" y="44" width="1" height="4" fill="#c01030"/>
<rect x="1049" y="51" width="1" height="4" fill="#c01030"/>
<rect x="1080" y="44" width="1" height="4" fill="#c01030"/>
<rect x="1080" y="51" width="1" height="4" fill="#c01030"/>
<rect x="1110" y="44" width="1" height="4" fill="#c01030"/>
<rect x="1110" y="51" width="1" height="4" fill="#c01030"/>
<rect x="1141" y="44" width="1" height="4" fill="#c01030"/>
<rect x="1141" y="51" width="1" height="4" fill="#c01030"/>
<rect x="1171" y="44" width="1" height="4" fill="#c01030"/>
<rect x="1171" y="51" width="1" height="4" fill="#c01030"/>
<rect x="1202" y="44" width="1" height="4" fill="#c01030"/>
<rect x="1202" y="51" width="1" height="4" fill="#c01030"/>
<rect x="860" y="35" width="1" height="5" fill="#c01030"/>
<rect x="988" y="35" width="1" height="5" fill="#c01030"/>
<rect x="1122" y="35" width="1" height="5" fill="#c01030"/>
</svg>
<div class="gh" style="left:980px;top:25px;color:#000">2011</div>
<div class="gh c" style="left:770px;width:60px;top:33px;color:#404040;-webkit-text-stroke:0.2px #404040">March</div>
<div class="gh c" style="left:894px;width:60px;top:33px;color:#404040;-webkit-text-stroke:0.2px #404040">April</div>
<div class="gh c" style="left:1025px;width:60px;top:33px;color:#404040;-webkit-text-stroke:0.2px #404040">May</div>
<div class="gh c" style="left:1148px;width:60px;top:33px;color:#404040;-webkit-text-stroke:0.2px #404040">June</div>
<div class="gh" style="left:746px;top:41px">7</div>
<div class="gh" style="left:776px;top:41px">14</div>
<div class="gh" style="left:807px;top:41px">21</div>
<div class="gh" style="left:837px;top:41px">28</div>
<div class="gh" style="left:868px;top:41px">4</div>
<div class="gh" style="left:898px;top:41px">11</div>
<div class="gh" style="left:929px;top:41px">18</div>
<div class="gh" style="left:959px;top:41px">25</div>
<div class="gh" style="left:990px;top:41px">2</div>
<div class="gh" style="left:1020px;top:41px">9</div>
<div class="gh" style="left:1051px;top:41px">16</div>
<div class="gh" style="left:1082px;top:41px">23</div>
<div class="gh" style="left:1112px;top:41px">30</div>
<div class="gh" style="left:1143px;top:41px">6</div>
<div class="gh" style="left:1173px;top:41px">13</div>
<div class="gh" style="left:1204px;top:41px">20</div>
<div class="gh c" style="left:744px;width:30px;top:49px">8</div>
<div class="gh c" style="left:774px;width:31px;top:49px">9</div>
<div class="gh c" style="left:805px;width:30px;top:49px">10</div>
<div class="gh c" style="left:835px;width:31px;top:49px">11</div>
<div class="gh c" style="left:866px;width:30px;top:49px">12</div>
<div class="gh c" style="left:896px;width:31px;top:49px">13</div>
<div class="gh c" style="left:927px;width:30px;top:49px">14</div>
<div class="gh c" style="left:957px;width:31px;top:49px">15</div>
<div class="gh c" style="left:988px;width:30px;top:49px">16</div>
<div class="gh c" style="left:1018px;width:31px;top:49px">17</div>
<div class="gh c" style="left:1049px;width:31px;top:49px">18</div>
<div class="gh c" style="left:1080px;width:30px;top:49px">19</div>
<div class="gh c" style="left:1110px;width:31px;top:49px">20</div>
<div class="gh c" style="left:1141px;width:30px;top:49px">21</div>
<div class="gh c" style="left:1171px;width:31px;top:49px">22</div>
<div class="gh c" style="left:1202px;width:31px;top:49px">23</div>
<svg class="a" style="left:0;top:0" width="1232" height="576" viewBox="0 0 1232 576" shape-rendering="crispEdges">
<rect x="744" y="60" width="1" height="16" fill="url(#dot)"/>
<rect x="744" y="79" width="1" height="17" fill="url(#dot)"/>
<rect x="744" y="99" width="1" height="15" fill="url(#dot)"/>
<rect x="744" y="117" width="1" height="16" fill="url(#dot)"/>
<rect x="744" y="136" width="1" height="15" fill="url(#dot)"/>
<rect x="744" y="154" width="1" height="16" fill="url(#dot)"/>
<rect x="744" y="173" width="1" height="16" fill="url(#dot)"/>
<rect x="744" y="192" width="1" height="16" fill="url(#dot)"/>
<rect x="744" y="211" width="1" height="15" fill="url(#dot)"/>
<rect x="744" y="229" width="1" height="16" fill="url(#dot)"/>
<rect x="744" y="248" width="1" height="15" fill="url(#dot)"/>
<rect x="744" y="266" width="1" height="17" fill="url(#dot)"/>
<rect x="744" y="286" width="1" height="17" fill="url(#dot)"/>
<rect x="744" y="306" width="1" height="15" fill="url(#dot)"/>
<rect x="744" y="324" width="1" height="16" fill="url(#dot)"/>
<rect x="744" y="343" width="1" height="15" fill="url(#dot)"/>
<rect x="744" y="361" width="1" height="16" fill="url(#dot)"/>
<rect x="744" y="380" width="1" height="17" fill="url(#dot)"/>
<rect x="744" y="400" width="1" height="17" fill="url(#dot)"/>
<rect x="744" y="420" width="1" height="15" fill="url(#dot)"/>
<rect x="744" y="438" width="1" height="16" fill="url(#dot)"/>
<rect x="744" y="457" width="1" height="15" fill="url(#dot)"/>
<rect x="744" y="475" width="1" height="16" fill="url(#dot)"/>
<rect x="744" y="494" width="1" height="16" fill="url(#dot)"/>
<rect x="744" y="513" width="1" height="17" fill="url(#dot)"/>
<rect x="744" y="533" width="1" height="16" fill="url(#dot)"/>
<rect x="744" y="552" width="1" height="15" fill="url(#dot)"/>
<rect x="774" y="60" width="1" height="16" fill="url(#dot)"/>
<rect x="774" y="79" width="1" height="17" fill="url(#dot)"/>
<rect x="774" y="99" width="1" height="15" fill="url(#dot)"/>
<rect x="774" y="117" width="1" height="16" fill="url(#dot)"/>
<rect x="774" y="136" width="1" height="15" fill="url(#dot)"/>
<rect x="774" y="154" width="1" height="16" fill="url(#dot)"/>
<rect x="774" y="173" width="1" height="16" fill="url(#dot)"/>
<rect x="774" y="192" width="1" height="16" fill="url(#dot)"/>
<rect x="774" y="211" width="1" height="15" fill="url(#dot)"/>
<rect x="774" y="229" width="1" height="16" fill="url(#dot)"/>
<rect x="774" y="248" width="1" height="15" fill="url(#dot)"/>
<rect x="774" y="266" width="1" height="17" fill="url(#dot)"/>
<rect x="774" y="286" width="1" height="17" fill="url(#dot)"/>
<rect x="774" y="306" width="1" height="15" fill="url(#dot)"/>
<rect x="774" y="324" width="1" height="16" fill="url(#dot)"/>
<rect x="774" y="343" width="1" height="15" fill="url(#dot)"/>
<rect x="774" y="361" width="1" height="16" fill="url(#dot)"/>
<rect x="774" y="380" width="1" height="17" fill="url(#dot)"/>
<rect x="774" y="400" width="1" height="17" fill="url(#dot)"/>
<rect x="774" y="420" width="1" height="15" fill="url(#dot)"/>
<rect x="774" y="438" width="1" height="16" fill="url(#dot)"/>
<rect x="774" y="457" width="1" height="15" fill="url(#dot)"/>
<rect x="774" y="475" width="1" height="16" fill="url(#dot)"/>
<rect x="774" y="494" width="1" height="16" fill="url(#dot)"/>
<rect x="774" y="513" width="1" height="17" fill="url(#dot)"/>
<rect x="774" y="533" width="1" height="16" fill="url(#dot)"/>
<rect x="774" y="552" width="1" height="15" fill="url(#dot)"/>
<rect x="805" y="60" width="1" height="16" fill="url(#dot)"/>
<rect x="805" y="79" width="1" height="17" fill="url(#dot)"/>
<rect x="805" y="99" width="1" height="15" fill="url(#dot)"/>
<rect x="805" y="117" width="1" height="16" fill="url(#dot)"/>
<rect x="805" y="136" width="1" height="15" fill="url(#dot)"/>
<rect x="805" y="154" width="1" height="16" fill="url(#dot)"/>
<rect x="805" y="173" width="1" height="16" fill="url(#dot)"/>
<rect x="805" y="192" width="1" height="16" fill="url(#dot)"/>
<rect x="805" y="211" width="1" height="15" fill="url(#dot)"/>
<rect x="805" y="229" width="1" height="16" fill="url(#dot)"/>
<rect x="805" y="248" width="1" height="15" fill="url(#dot)"/>
<rect x="805" y="266" width="1" height="17" fill="url(#dot)"/>
<rect x="805" y="286" width="1" height="17" fill="url(#dot)"/>
<rect x="805" y="306" width="1" height="15" fill="url(#dot)"/>
<rect x="805" y="324" width="1" height="16" fill="url(#dot)"/>
<rect x="805" y="343" width="1" height="15" fill="url(#dot)"/>
<rect x="805" y="361" width="1" height="16" fill="url(#dot)"/>
<rect x="805" y="380" width="1" height="17" fill="url(#dot)"/>
<rect x="805" y="400" width="1" height="17" fill="url(#dot)"/>
<rect x="805" y="420" width="1" height="15" fill="url(#dot)"/>
<rect x="805" y="438" width="1" height="16" fill="url(#dot)"/>
<rect x="805" y="457" width="1" height="15" fill="url(#dot)"/>
<rect x="805" y="475" width="1" height="16" fill="url(#dot)"/>
<rect x="805" y="494" width="1" height="16" fill="url(#dot)"/>
<rect x="805" y="513" width="1" height="17" fill="url(#dot)"/>
<rect x="805" y="533" width="1" height="16" fill="url(#dot)"/>
<rect x="805" y="552" width="1" height="15" fill="url(#dot)"/>
<rect x="835" y="60" width="1" height="16" fill="url(#dot)"/>
<rect x="835" y="79" width="1" height="17" fill="url(#dot)"/>
<rect x="835" y="99" width="1" height="15" fill="url(#dot)"/>
<rect x="835" y="117" width="1" height="16" fill="url(#dot)"/>
<rect x="835" y="136" width="1" height="15" fill="url(#dot)"/>
<rect x="835" y="154" width="1" height="16" fill="url(#dot)"/>
<rect x="835" y="173" width="1" height="16" fill="url(#dot)"/>
<rect x="835" y="192" width="1" height="16" fill="url(#dot)"/>
<rect x="835" y="211" width="1" height="15" fill="url(#dot)"/>
<rect x="835" y="229" width="1" height="16" fill="url(#dot)"/>
<rect x="835" y="248" width="1" height="15" fill="url(#dot)"/>
<rect x="835" y="266" width="1" height="17" fill="url(#dot)"/>
<rect x="835" y="286" width="1" height="17" fill="url(#dot)"/>
<rect x="835" y="306" width="1" height="15" fill="url(#dot)"/>
<rect x="835" y="324" width="1" height="16" fill="url(#dot)"/>
<rect x="835" y="343" width="1" height="15" fill="url(#dot)"/>
<rect x="835" y="361" width="1" height="16" fill="url(#dot)"/>
<rect x="835" y="380" width="1" height="17" fill="url(#dot)"/>
<rect x="835" y="400" width="1" height="17" fill="url(#dot)"/>
<rect x="835" y="420" width="1" height="15" fill="url(#dot)"/>
<rect x="835" y="438" width="1" height="16" fill="url(#dot)"/>
<rect x="835" y="457" width="1" height="15" fill="url(#dot)"/>
<rect x="835" y="475" width="1" height="16" fill="url(#dot)"/>
<rect x="835" y="494" width="1" height="16" fill="url(#dot)"/>
<rect x="835" y="513" width="1" height="17" fill="url(#dot)"/>
<rect x="835" y="533" width="1" height="16" fill="url(#dot)"/>
<rect x="835" y="552" width="1" height="15" fill="url(#dot)"/>
<rect x="866" y="60" width="1" height="16" fill="url(#dot)"/>
<rect x="866" y="79" width="1" height="17" fill="url(#dot)"/>
<rect x="866" y="99" width="1" height="15" fill="url(#dot)"/>
<rect x="866" y="117" width="1" height="16" fill="url(#dot)"/>
<rect x="866" y="136" width="1" height="15" fill="url(#dot)"/>
<rect x="866" y="154" width="1" height="16" fill="url(#dot)"/>
<rect x="866" y="173" width="1" height="16" fill="url(#dot)"/>
<rect x="866" y="192" width="1" height="16" fill="url(#dot)"/>
<rect x="866" y="211" width="1" height="15" fill="url(#dot)"/>
<rect x="866" y="229" width="1" height="16" fill="url(#dot)"/>
<rect x="866" y="248" width="1" height="15" fill="url(#dot)"/>
<rect x="866" y="266" width="1" height="17" fill="url(#dot)"/>
<rect x="866" y="286" width="1" height="17" fill="url(#dot)"/>
<rect x="866" y="306" width="1" height="15" fill="url(#dot)"/>
<rect x="866" y="324" width="1" height="16" fill="url(#dot)"/>
<rect x="866" y="343" width="1" height="15" fill="url(#dot)"/>
<rect x="866" y="361" width="1" height="16" fill="url(#dot)"/>
<rect x="866" y="380" width="1" height="17" fill="url(#dot)"/>
<rect x="866" y="400" width="1" height="17" fill="url(#dot)"/>
<rect x="866" y="420" width="1" height="15" fill="url(#dot)"/>
<rect x="866" y="438" width="1" height="16" fill="url(#dot)"/>
<rect x="866" y="457" width="1" height="15" fill="url(#dot)"/>
<rect x="866" y="475" width="1" height="16" fill="url(#dot)"/>
<rect x="866" y="494" width="1" height="16" fill="url(#dot)"/>
<rect x="866" y="513" width="1" height="17" fill="url(#dot)"/>
<rect x="866" y="533" width="1" height="16" fill="url(#dot)"/>
<rect x="866" y="552" width="1" height="15" fill="url(#dot)"/>
<rect x="896" y="60" width="1" height="16" fill="url(#dot)"/>
<rect x="896" y="79" width="1" height="17" fill="url(#dot)"/>
<rect x="896" y="99" width="1" height="15" fill="url(#dot)"/>
<rect x="896" y="117" width="1" height="16" fill="url(#dot)"/>
<rect x="896" y="136" width="1" height="15" fill="url(#dot)"/>
<rect x="896" y="154" width="1" height="16" fill="url(#dot)"/>
<rect x="896" y="173" width="1" height="16" fill="url(#dot)"/>
<rect x="896" y="192" width="1" height="16" fill="url(#dot)"/>
<rect x="896" y="211" width="1" height="15" fill="url(#dot)"/>
<rect x="896" y="229" width="1" height="16" fill="url(#dot)"/>
<rect x="896" y="248" width="1" height="15" fill="url(#dot)"/>
<rect x="896" y="266" width="1" height="17" fill="url(#dot)"/>
<rect x="896" y="286" width="1" height="17" fill="url(#dot)"/>
<rect x="896" y="306" width="1" height="15" fill="url(#dot)"/>
<rect x="896" y="324" width="1" height="16" fill="url(#dot)"/>
<rect x="896" y="343" width="1" height="15" fill="url(#dot)"/>
<rect x="896" y="361" width="1" height="16" fill="url(#dot)"/>
<rect x="896" y="380" width="1" height="17" fill="url(#dot)"/>
<rect x="896" y="400" width="1" height="17" fill="url(#dot)"/>
<rect x="896" y="420" width="1" height="15" fill="url(#dot)"/>
<rect x="896" y="438" width="1" height="16" fill="url(#dot)"/>
<rect x="896" y="457" width="1" height="15" fill="url(#dot)"/>
<rect x="896" y="475" width="1" height="16" fill="url(#dot)"/>
<rect x="896" y="494" width="1" height="16" fill="url(#dot)"/>
<rect x="896" y="513" width="1" height="17" fill="url(#dot)"/>
<rect x="896" y="533" width="1" height="16" fill="url(#dot)"/>
<rect x="896" y="552" width="1" height="15" fill="url(#dot)"/>
<rect x="927" y="60" width="1" height="16" fill="url(#dot)"/>
<rect x="927" y="79" width="1" height="17" fill="url(#dot)"/>
<rect x="927" y="99" width="1" height="15" fill="url(#dot)"/>
<rect x="927" y="117" width="1" height="16" fill="url(#dot)"/>
<rect x="927" y="136" width="1" height="15" fill="url(#dot)"/>
<rect x="927" y="154" width="1" height="16" fill="url(#dot)"/>
<rect x="927" y="173" width="1" height="16" fill="url(#dot)"/>
<rect x="927" y="192" width="1" height="16" fill="url(#dot)"/>
<rect x="927" y="211" width="1" height="15" fill="url(#dot)"/>
<rect x="927" y="229" width="1" height="16" fill="url(#dot)"/>
<rect x="927" y="248" width="1" height="15" fill="url(#dot)"/>
<rect x="927" y="266" width="1" height="17" fill="url(#dot)"/>
<rect x="927" y="286" width="1" height="17" fill="url(#dot)"/>
<rect x="927" y="306" width="1" height="15" fill="url(#dot)"/>
<rect x="927" y="324" width="1" height="16" fill="url(#dot)"/>
<rect x="927" y="343" width="1" height="15" fill="url(#dot)"/>
<rect x="927" y="361" width="1" height="16" fill="url(#dot)"/>
<rect x="927" y="380" width="1" height="17" fill="url(#dot)"/>
<rect x="927" y="400" width="1" height="17" fill="url(#dot)"/>
<rect x="927" y="420" width="1" height="15" fill="url(#dot)"/>
<rect x="927" y="438" width="1" height="16" fill="url(#dot)"/>
<rect x="927" y="457" width="1" height="15" fill="url(#dot)"/>
<rect x="927" y="475" width="1" height="16" fill="url(#dot)"/>
<rect x="927" y="494" width="1" height="16" fill="url(#dot)"/>
<rect x="927" y="513" width="1" height="17" fill="url(#dot)"/>
<rect x="927" y="533" width="1" height="16" fill="url(#dot)"/>
<rect x="927" y="552" width="1" height="15" fill="url(#dot)"/>
<rect x="957" y="60" width="1" height="16" fill="url(#dot)"/>
<rect x="957" y="79" width="1" height="17" fill="url(#dot)"/>
<rect x="957" y="99" width="1" height="15" fill="url(#dot)"/>
<rect x="957" y="117" width="1" height="16" fill="url(#dot)"/>
<rect x="957" y="136" width="1" height="15" fill="url(#dot)"/>
<rect x="957" y="154" width="1" height="16" fill="url(#dot)"/>
<rect x="957" y="173" width="1" height="16" fill="url(#dot)"/>
<rect x="957" y="192" width="1" height="16" fill="url(#dot)"/>
<rect x="957" y="211" width="1" height="15" fill="url(#dot)"/>
<rect x="957" y="229" width="1" height="16" fill="url(#dot)"/>
<rect x="957" y="248" width="1" height="15" fill="url(#dot)"/>
<rect x="957" y="266" width="1" height="17" fill="url(#dot)"/>
<rect x="957" y="286" width="1" height="17" fill="url(#dot)"/>
<rect x="957" y="306" width="1" height="15" fill="url(#dot)"/>
<rect x="957" y="324" width="1" height="16" fill="url(#dot)"/>
<rect x="957" y="343" width="1" height="15" fill="url(#dot)"/>
<rect x="957" y="361" width="1" height="16" fill="url(#dot)"/>
<rect x="957" y="380" width="1" height="17" fill="url(#dot)"/>
<rect x="957" y="400" width="1" height="17" fill="url(#dot)"/>
<rect x="957" y="420" width="1" height="15" fill="url(#dot)"/>
<rect x="957" y="438" width="1" height="16" fill="url(#dot)"/>
<rect x="957" y="457" width="1" height="15" fill="url(#dot)"/>
<rect x="957" y="475" width="1" height="16" fill="url(#dot)"/>
<rect x="957" y="494" width="1" height="16" fill="url(#dot)"/>
<rect x="957" y="513" width="1" height="17" fill="url(#dot)"/>
<rect x="957" y="533" width="1" height="16" fill="url(#dot)"/>
<rect x="957" y="552" width="1" height="15" fill="url(#dot)"/>
<rect x="988" y="60" width="1" height="16" fill="url(#dot)"/>
<rect x="988" y="79" width="1" height="17" fill="url(#dot)"/>
<rect x="988" y="99" width="1" height="15" fill="url(#dot)"/>
<rect x="988" y="117" width="1" height="16" fill="url(#dot)"/>
<rect x="988" y="136" width="1" height="15" fill="url(#dot)"/>
<rect x="988" y="154" width="1" height="16" fill="url(#dot)"/>
<rect x="988" y="173" width="1" height="16" fill="url(#dot)"/>
<rect x="988" y="192" width="1" height="16" fill="url(#dot)"/>
<rect x="988" y="211" width="1" height="15" fill="url(#dot)"/>
<rect x="988" y="229" width="1" height="16" fill="url(#dot)"/>
<rect x="988" y="248" width="1" height="15" fill="url(#dot)"/>
<rect x="988" y="266" width="1" height="17" fill="url(#dot)"/>
<rect x="988" y="286" width="1" height="17" fill="url(#dot)"/>
<rect x="988" y="306" width="1" height="15" fill="url(#dot)"/>
<rect x="988" y="324" width="1" height="16" fill="url(#dot)"/>
<rect x="988" y="343" width="1" height="15" fill="url(#dot)"/>
<rect x="988" y="361" width="1" height="16" fill="url(#dot)"/>
<rect x="988" y="380" width="1" height="17" fill="url(#dot)"/>
<rect x="988" y="400" width="1" height="17" fill="url(#dot)"/>
<rect x="988" y="420" width="1" height="15" fill="url(#dot)"/>
<rect x="988" y="438" width="1" height="16" fill="url(#dot)"/>
<rect x="988" y="457" width="1" height="15" fill="url(#dot)"/>
<rect x="988" y="475" width="1" height="16" fill="url(#dot)"/>
<rect x="988" y="494" width="1" height="16" fill="url(#dot)"/>
<rect x="988" y="513" width="1" height="17" fill="url(#dot)"/>
<rect x="988" y="533" width="1" height="16" fill="url(#dot)"/>
<rect x="988" y="552" width="1" height="15" fill="url(#dot)"/>
<rect x="1018" y="60" width="1" height="16" fill="url(#dot)"/>
<rect x="1018" y="79" width="1" height="17" fill="url(#dot)"/>
<rect x="1018" y="99" width="1" height="15" fill="url(#dot)"/>
<rect x="1018" y="117" width="1" height="16" fill="url(#dot)"/>
<rect x="1018" y="136" width="1" height="15" fill="url(#dot)"/>
<rect x="1018" y="154" width="1" height="16" fill="url(#dot)"/>
<rect x="1018" y="173" width="1" height="16" fill="url(#dot)"/>
<rect x="1018" y="192" width="1" height="16" fill="url(#dot)"/>
<rect x="1018" y="211" width="1" height="15" fill="url(#dot)"/>
<rect x="1018" y="229" width="1" height="16" fill="url(#dot)"/>
<rect x="1018" y="248" width="1" height="15" fill="url(#dot)"/>
<rect x="1018" y="266" width="1" height="17" fill="url(#dot)"/>
<rect x="1018" y="286" width="1" height="17" fill="url(#dot)"/>
<rect x="1018" y="306" width="1" height="15" fill="url(#dot)"/>
<rect x="1018" y="324" width="1" height="16" fill="url(#dot)"/>
<rect x="1018" y="343" width="1" height="15" fill="url(#dot)"/>
<rect x="1018" y="361" width="1" height="16" fill="url(#dot)"/>
<rect x="1018" y="380" width="1" height="17" fill="url(#dot)"/>
<rect x="1018" y="400" width="1" height="17" fill="url(#dot)"/>
<rect x="1018" y="420" width="1" height="15" fill="url(#dot)"/>
<rect x="1018" y="438" width="1" height="16" fill="url(#dot)"/>
<rect x="1018" y="457" width="1" height="15" fill="url(#dot)"/>
<rect x="1018" y="475" width="1" height="16" fill="url(#dot)"/>
<rect x="1018" y="494" width="1" height="16" fill="url(#dot)"/>
<rect x="1018" y="513" width="1" height="17" fill="url(#dot)"/>
<rect x="1018" y="533" width="1" height="16" fill="url(#dot)"/>
<rect x="1018" y="552" width="1" height="15" fill="url(#dot)"/>
<rect x="1049" y="60" width="1" height="16" fill="url(#dot)"/>
<rect x="1049" y="79" width="1" height="17" fill="url(#dot)"/>
<rect x="1049" y="99" width="1" height="15" fill="url(#dot)"/>
<rect x="1049" y="117" width="1" height="16" fill="url(#dot)"/>
<rect x="1049" y="136" width="1" height="15" fill="url(#dot)"/>
<rect x="1049" y="154" width="1" height="16" fill="url(#dot)"/>
<rect x="1049" y="173" width="1" height="16" fill="url(#dot)"/>
<rect x="1049" y="192" width="1" height="16" fill="url(#dot)"/>
<rect x="1049" y="211" width="1" height="15" fill="url(#dot)"/>
<rect x="1049" y="229" width="1" height="16" fill="url(#dot)"/>
<rect x="1049" y="248" width="1" height="15" fill="url(#dot)"/>
<rect x="1049" y="266" width="1" height="17" fill="url(#dot)"/>
<rect x="1049" y="286" width="1" height="17" fill="url(#dot)"/>
<rect x="1049" y="306" width="1" height="15" fill="url(#dot)"/>
<rect x="1049" y="324" width="1" height="16" fill="url(#dot)"/>
<rect x="1049" y="343" width="1" height="15" fill="url(#dot)"/>
<rect x="1049" y="361" width="1" height="16" fill="url(#dot)"/>
<rect x="1049" y="380" width="1" height="17" fill="url(#dot)"/>
<rect x="1049" y="400" width="1" height="17" fill="url(#dot)"/>
<rect x="1049" y="420" width="1" height="15" fill="url(#dot)"/>
<rect x="1049" y="438" width="1" height="16" fill="url(#dot)"/>
<rect x="1049" y="457" width="1" height="15" fill="url(#dot)"/>
<rect x="1049" y="475" width="1" height="16" fill="url(#dot)"/>
<rect x="1049" y="494" width="1" height="16" fill="url(#dot)"/>
<rect x="1049" y="513" width="1" height="17" fill="url(#dot)"/>
<rect x="1049" y="533" width="1" height="16" fill="url(#dot)"/>
<rect x="1049" y="552" width="1" height="15" fill="url(#dot)"/>
<rect x="1080" y="60" width="1" height="16" fill="url(#dot)"/>
<rect x="1080" y="79" width="1" height="17" fill="url(#dot)"/>
<rect x="1080" y="99" width="1" height="15" fill="url(#dot)"/>
<rect x="1080" y="117" width="1" height="16" fill="url(#dot)"/>
<rect x="1080" y="136" width="1" height="15" fill="url(#dot)"/>
<rect x="1080" y="154" width="1" height="16" fill="url(#dot)"/>
<rect x="1080" y="173" width="1" height="16" fill="url(#dot)"/>
<rect x="1080" y="192" width="1" height="16" fill="url(#dot)"/>
<rect x="1080" y="211" width="1" height="15" fill="url(#dot)"/>
<rect x="1080" y="229" width="1" height="16" fill="url(#dot)"/>
<rect x="1080" y="248" width="1" height="15" fill="url(#dot)"/>
<rect x="1080" y="266" width="1" height="17" fill="url(#dot)"/>
<rect x="1080" y="286" width="1" height="17" fill="url(#dot)"/>
<rect x="1080" y="306" width="1" height="15" fill="url(#dot)"/>
<rect x="1080" y="324" width="1" height="16" fill="url(#dot)"/>
<rect x="1080" y="343" width="1" height="15" fill="url(#dot)"/>
<rect x="1080" y="361" width="1" height="16" fill="url(#dot)"/>
<rect x="1080" y="380" width="1" height="17" fill="url(#dot)"/>
<rect x="1080" y="400" width="1" height="17" fill="url(#dot)"/>
<rect x="1080" y="420" width="1" height="15" fill="url(#dot)"/>
<rect x="1080" y="438" width="1" height="16" fill="url(#dot)"/>
<rect x="1080" y="457" width="1" height="15" fill="url(#dot)"/>
<rect x="1080" y="475" width="1" height="16" fill="url(#dot)"/>
<rect x="1080" y="494" width="1" height="16" fill="url(#dot)"/>
<rect x="1080" y="513" width="1" height="17" fill="url(#dot)"/>
<rect x="1080" y="533" width="1" height="16" fill="url(#dot)"/>
<rect x="1080" y="552" width="1" height="15" fill="url(#dot)"/>
<rect x="1110" y="60" width="1" height="16" fill="url(#dot)"/>
<rect x="1110" y="79" width="1" height="17" fill="url(#dot)"/>
<rect x="1110" y="99" width="1" height="15" fill="url(#dot)"/>
<rect x="1110" y="117" width="1" height="16" fill="url(#dot)"/>
<rect x="1110" y="136" width="1" height="15" fill="url(#dot)"/>
<rect x="1110" y="154" width="1" height="16" fill="url(#dot)"/>
<rect x="1110" y="173" width="1" height="16" fill="url(#dot)"/>
<rect x="1110" y="192" width="1" height="16" fill="url(#dot)"/>
<rect x="1110" y="211" width="1" height="15" fill="url(#dot)"/>
<rect x="1110" y="229" width="1" height="16" fill="url(#dot)"/>
<rect x="1110" y="248" width="1" height="15" fill="url(#dot)"/>
<rect x="1110" y="266" width="1" height="17" fill="url(#dot)"/>
<rect x="1110" y="286" width="1" height="17" fill="url(#dot)"/>
<rect x="1110" y="306" width="1" height="15" fill="url(#dot)"/>
<rect x="1110" y="324" width="1" height="16" fill="url(#dot)"/>
<rect x="1110" y="343" width="1" height="15" fill="url(#dot)"/>
<rect x="1110" y="361" width="1" height="16" fill="url(#dot)"/>
<rect x="1110" y="380" width="1" height="17" fill="url(#dot)"/>
<rect x="1110" y="400" width="1" height="17" fill="url(#dot)"/>
<rect x="1110" y="420" width="1" height="15" fill="url(#dot)"/>
<rect x="1110" y="438" width="1" height="16" fill="url(#dot)"/>
<rect x="1110" y="457" width="1" height="15" fill="url(#dot)"/>
<rect x="1110" y="475" width="1" height="16" fill="url(#dot)"/>
<rect x="1110" y="494" width="1" height="16" fill="url(#dot)"/>
<rect x="1110" y="513" width="1" height="17" fill="url(#dot)"/>
<rect x="1110" y="533" width="1" height="16" fill="url(#dot)"/>
<rect x="1110" y="552" width="1" height="15" fill="url(#dot)"/>
<rect x="1141" y="60" width="1" height="16" fill="url(#dot)"/>
<rect x="1141" y="79" width="1" height="17" fill="url(#dot)"/>
<rect x="1141" y="99" width="1" height="15" fill="url(#dot)"/>
<rect x="1141" y="117" width="1" height="16" fill="url(#dot)"/>
<rect x="1141" y="136" width="1" height="15" fill="url(#dot)"/>
<rect x="1141" y="154" width="1" height="16" fill="url(#dot)"/>
<rect x="1141" y="173" width="1" height="16" fill="url(#dot)"/>
<rect x="1141" y="192" width="1" height="16" fill="url(#dot)"/>
<rect x="1141" y="211" width="1" height="15" fill="url(#dot)"/>
<rect x="1141" y="229" width="1" height="16" fill="url(#dot)"/>
<rect x="1141" y="248" width="1" height="15" fill="url(#dot)"/>
<rect x="1141" y="266" width="1" height="17" fill="url(#dot)"/>
<rect x="1141" y="286" width="1" height="17" fill="url(#dot)"/>
<rect x="1141" y="306" width="1" height="15" fill="url(#dot)"/>
<rect x="1141" y="324" width="1" height="16" fill="url(#dot)"/>
<rect x="1141" y="343" width="1" height="15" fill="url(#dot)"/>
<rect x="1141" y="361" width="1" height="16" fill="url(#dot)"/>
<rect x="1141" y="380" width="1" height="17" fill="url(#dot)"/>
<rect x="1141" y="400" width="1" height="17" fill="url(#dot)"/>
<rect x="1141" y="420" width="1" height="15" fill="url(#dot)"/>
<rect x="1141" y="438" width="1" height="16" fill="url(#dot)"/>
<rect x="1141" y="457" width="1" height="15" fill="url(#dot)"/>
<rect x="1141" y="475" width="1" height="16" fill="url(#dot)"/>
<rect x="1141" y="494" width="1" height="16" fill="url(#dot)"/>
<rect x="1141" y="513" width="1" height="17" fill="url(#dot)"/>
<rect x="1141" y="533" width="1" height="16" fill="url(#dot)"/>
<rect x="1141" y="552" width="1" height="15" fill="url(#dot)"/>
<rect x="1171" y="60" width="1" height="16" fill="url(#dot)"/>
<rect x="1171" y="79" width="1" height="17" fill="url(#dot)"/>
<rect x="1171" y="99" width="1" height="15" fill="url(#dot)"/>
<rect x="1171" y="117" width="1" height="16" fill="url(#dot)"/>
<rect x="1171" y="136" width="1" height="15" fill="url(#dot)"/>
<rect x="1171" y="154" width="1" height="16" fill="url(#dot)"/>
<rect x="1171" y="173" width="1" height="16" fill="url(#dot)"/>
<rect x="1171" y="192" width="1" height="16" fill="url(#dot)"/>
<rect x="1171" y="211" width="1" height="15" fill="url(#dot)"/>
<rect x="1171" y="229" width="1" height="16" fill="url(#dot)"/>
<rect x="1171" y="248" width="1" height="15" fill="url(#dot)"/>
<rect x="1171" y="266" width="1" height="17" fill="url(#dot)"/>
<rect x="1171" y="286" width="1" height="17" fill="url(#dot)"/>
<rect x="1171" y="306" width="1" height="15" fill="url(#dot)"/>
<rect x="1171" y="324" width="1" height="16" fill="url(#dot)"/>
<rect x="1171" y="343" width="1" height="15" fill="url(#dot)"/>
<rect x="1171" y="361" width="1" height="16" fill="url(#dot)"/>
<rect x="1171" y="380" width="1" height="17" fill="url(#dot)"/>
<rect x="1171" y="400" width="1" height="17" fill="url(#dot)"/>
<rect x="1171" y="420" width="1" height="15" fill="url(#dot)"/>
<rect x="1171" y="438" width="1" height="16" fill="url(#dot)"/>
<rect x="1171" y="457" width="1" height="15" fill="url(#dot)"/>
<rect x="1171" y="475" width="1" height="16" fill="url(#dot)"/>
<rect x="1171" y="494" width="1" height="16" fill="url(#dot)"/>
<rect x="1171" y="513" width="1" height="17" fill="url(#dot)"/>
<rect x="1171" y="533" width="1" height="16" fill="url(#dot)"/>
<rect x="1171" y="552" width="1" height="15" fill="url(#dot)"/>
<rect x="1202" y="60" width="1" height="16" fill="url(#dot)"/>
<rect x="1202" y="79" width="1" height="17" fill="url(#dot)"/>
<rect x="1202" y="99" width="1" height="15" fill="url(#dot)"/>
<rect x="1202" y="117" width="1" height="16" fill="url(#dot)"/>
<rect x="1202" y="136" width="1" height="15" fill="url(#dot)"/>
<rect x="1202" y="154" width="1" height="16" fill="url(#dot)"/>
<rect x="1202" y="173" width="1" height="16" fill="url(#dot)"/>
<rect x="1202" y="192" width="1" height="16" fill="url(#dot)"/>
<rect x="1202" y="211" width="1" height="15" fill="url(#dot)"/>
<rect x="1202" y="229" width="1" height="16" fill="url(#dot)"/>
<rect x="1202" y="248" width="1" height="15" fill="url(#dot)"/>
<rect x="1202" y="266" width="1" height="17" fill="url(#dot)"/>
<rect x="1202" y="286" width="1" height="17" fill="url(#dot)"/>
<rect x="1202" y="306" width="1" height="15" fill="url(#dot)"/>
<rect x="1202" y="324" width="1" height="16" fill="url(#dot)"/>
<rect x="1202" y="343" width="1" height="15" fill="url(#dot)"/>
<rect x="1202" y="361" width="1" height="16" fill="url(#dot)"/>
<rect x="1202" y="380" width="1" height="17" fill="url(#dot)"/>
<rect x="1202" y="400" width="1" height="17" fill="url(#dot)"/>
<rect x="1202" y="420" width="1" height="15" fill="url(#dot)"/>
<rect x="1202" y="438" width="1" height="16" fill="url(#dot)"/>
<rect x="1202" y="457" width="1" height="15" fill="url(#dot)"/>
<rect x="1202" y="475" width="1" height="16" fill="url(#dot)"/>
<rect x="1202" y="494" width="1" height="16" fill="url(#dot)"/>
<rect x="1202" y="513" width="1" height="17" fill="url(#dot)"/>
<rect x="1202" y="533" width="1" height="16" fill="url(#dot)"/>
<rect x="1202" y="552" width="1" height="15" fill="url(#dot)"/>
<rect x="860" y="58" width="1" height="510" fill="url(#bdashdot)"/>
<rect x="1122" y="58" width="1" height="510" fill="url(#bdashdot)"/>
<rect x="909" y="58" width="1" height="510" fill="url(#rdash)"/>
<rect x="958" y="58" width="1" height="510" fill="url(#rdash)"/>
<rect x="1061" y="58" width="1" height="510" fill="url(#rdash)"/>
<rect x="1092" y="58" width="1" height="510" fill="url(#rdash)"/>
<rect x="1159" y="58" width="1" height="510" fill="url(#rdash)"/>
<rect x="1031" y="58" width="1" height="472" fill="url(#kdash)"/>
<rect x="1031" y="530" width="1" height="38" fill="#000"/>
<rect x="774" y="58" width="1" height="114" fill="#e04040"/>
<rect x="805" y="188" width="1" height="96" fill="#e01010"/>
<rect x="909" y="284" width="1" height="112" fill="#e01010"/>
<rect x="741" y="82" width="35" height="12" fill="#e02020"/>
<rect x="741" y="83" width="33" height="9" fill="url(#pw)"/>
<rect x="741" y="92" width="35" height="2" fill="#a01010"/>
<rect x="774" y="82" width="2" height="12" fill="#a01010"/>
<rect x="741" y="103" width="34" height="8" fill="#000"/>
<rect x="742" y="104" width="32" height="6" fill="url(#pg)"/>
<rect x="741" y="121" width="34" height="8" fill="#000"/>
<rect x="742" y="122" width="32" height="6" fill="url(#pb)"/>
<rect x="741" y="140" width="34" height="8" fill="#000"/>
<rect x="742" y="141" width="32" height="6" fill="url(#pr)"/>
<rect x="741" y="158" width="34" height="8" fill="#000"/>
<rect x="742" y="159" width="32" height="6" fill="#ffff80"/>
<polygon points="771.5,171 777.5,171 774.5,176" fill="#e01010" shape-rendering="geometricPrecision"/>
<rect x="774" y="176" width="32" height="12" fill="#d02000"/>
<rect x="775" y="177" width="30" height="9" fill="#ffff00"/>
<rect x="774" y="186" width="32" height="2" fill="#901000"/>
<rect x="774" y="196" width="32" height="8" fill="#000"/>
<rect x="775" y="197" width="30" height="6" fill="url(#pg)"/>
<rect x="774" y="215" width="32" height="8" fill="#000"/>
<rect x="775" y="216" width="30" height="6" fill="url(#pb)"/>
<rect x="774" y="233" width="32" height="8" fill="#000"/>
<rect x="775" y="234" width="30" height="6" fill="url(#pr)"/>
<rect x="774" y="252" width="32" height="8" fill="#000"/>
<rect x="775" y="253" width="30" height="6" fill="#ffff80"/>
<polygon points="802.5,283 808.5,283 805.5,288" fill="#e01010" shape-rendering="geometricPrecision"/>
<rect x="805" y="270" width="124" height="7" fill="#8c1040"/>
<rect x="806" y="272" width="122" height="3" fill="#2c2490"/>
<rect x="806" y="275" width="122" height="1" fill="#b82848"/>
<rect x="805" y="276" width="124" height="1" fill="#7c0818"/>
<polygon points="805,270 809,277 806,283 805,283" fill="#c01030" shape-rendering="geometricPrecision"/>
<rect x="925" y="270" width="4" height="12" fill="#901848"/>
<rect x="926" y="277" width="2" height="4" fill="#ffffff"/>
<rect x="805" y="288" width="124" height="15" fill="#a82828"/>
<rect x="805" y="299" width="124" height="3" fill="#e01818"/>
<rect x="805" y="302" width="124" height="1" fill="#801010"/>
<rect x="805" y="310" width="123" height="8" fill="#000"/>
<rect x="806" y="311" width="121" height="6" fill="url(#pg)"/>
<rect x="805" y="328" width="123" height="8" fill="#000"/>
<rect x="806" y="329" width="121" height="6" fill="url(#pb)"/>
<rect x="805" y="347" width="123" height="8" fill="#000"/>
<rect x="806" y="348" width="121" height="6" fill="url(#pr)"/>
<polygon points="1019.8,365.5 1025.3,371 1019.8,376.5 1014.3,371" fill="#000" shape-rendering="geometricPrecision"/>
<polygon points="1019.5,367.2 1023,370.7 1019.5,374.2 1016,370.7" fill="#f8f080" shape-rendering="geometricPrecision"/>
<polygon points="906.5,395.5 912.5,395.5 909.5,401" fill="#e01010" shape-rendering="geometricPrecision"/>
<rect x="909" y="383" width="75" height="7" fill="#8c1040"/>
<rect x="910" y="385" width="73" height="3" fill="#2c2490"/>
<rect x="910" y="388" width="73" height="1" fill="#b82848"/>
<rect x="909" y="389" width="75" height="1" fill="#7c0818"/>
<polygon points="909,383 913,390 910,396 909,396" fill="#c01030" shape-rendering="geometricPrecision"/>
<rect x="980" y="383" width="4" height="12" fill="#901848"/>
<rect x="981" y="390" width="2" height="4" fill="#ffffff"/>
<rect x="909" y="402" width="75" height="14" fill="#a82828"/>
<rect x="909" y="412" width="75" height="3" fill="#e01818"/>
<rect x="909" y="415" width="75" height="1" fill="#801010"/>
<rect x="909" y="424" width="74" height="8" fill="#000"/>
<rect x="910" y="425" width="72" height="6" fill="url(#pg)"/>
<rect x="909" y="442" width="74" height="8" fill="#000"/>
<rect x="910" y="443" width="72" height="6" fill="url(#pb)"/>
<rect x="909" y="461" width="74" height="8" fill="#000"/>
<rect x="910" y="462" width="72" height="6" fill="url(#pr)"/>
<rect x="909" y="479" width="74" height="8" fill="#000"/>
<rect x="910" y="480" width="72" height="6" fill="#ffff80"/>
<rect x="964" y="497" width="265" height="7" fill="#8c1040"/>
<rect x="965" y="499" width="263" height="3" fill="#2c2490"/>
<rect x="965" y="502" width="263" height="1" fill="#b82848"/>
<rect x="964" y="503" width="265" height="1" fill="#7c0818"/>
<polygon points="964,497 968,504 965,510 964,510" fill="#c01030" shape-rendering="geometricPrecision"/>
<rect x="964" y="517" width="98" height="13" fill="#e02020"/>
<rect x="965" y="518" width="96" height="10" fill="url(#pgr)"/>
<rect x="964" y="528" width="98" height="2" fill="#c01010"/>
<rect x="964" y="537" width="98" height="8" fill="#000"/>
<rect x="965" y="538" width="96" height="6" fill="url(#pg)"/>
<rect x="964" y="556" width="98" height="8" fill="#000"/>
<rect x="965" y="557" width="96" height="6" fill="url(#pb)"/>
<rect x="1061" y="517" width="1" height="51" fill="#e01010"/>
<rect x="951" y="58" width="13" height="510" fill="url(#hatch)"/>
<rect x="951" y="58" width="1" height="510" fill="#1a1ad0"/>
<rect x="963" y="58" width="1" height="510" fill="#1a1ad0"/>
<rect x="956" y="58" width="2" height="510" fill="#1010d0"/>
<rect x="963" y="58" width="1" height="510" fill="#5010a0"/>
<rect x="958" y="58" width="1" height="510" fill="url(#rdash)"/>
<rect x="988" y="58" width="6" height="510" fill="url(#hatch)"/>
<rect x="988" y="58" width="1" height="510" fill="#1a1ad0"/>
<rect x="993" y="58" width="1" height="510" fill="#1a1ad0"/>
<rect x="1110" y="58" width="6" height="510" fill="url(#hatch)"/>
<rect x="1110" y="58" width="1" height="510" fill="#1a1ad0"/>
<rect x="1115" y="58" width="1" height="510" fill="#1a1ad0"/>
<rect x="951" y="58" width="13" height="1" fill="#7c8cb0"/>
<rect x="988" y="58" width="6" height="1" fill="#7c8cb0"/>
<rect x="1110" y="58" width="6" height="1" fill="#7c8cb0"/>
<rect x="951" y="77" width="13" height="1" fill="#7c8cb0"/>
<rect x="988" y="77" width="6" height="1" fill="#7c8cb0"/>
<rect x="1110" y="77" width="6" height="1" fill="#7c8cb0"/>
<rect x="951" y="97" width="13" height="1" fill="#7c8cb0"/>
<rect x="988" y="97" width="6" height="1" fill="#7c8cb0"/>
<rect x="1110" y="97" width="6" height="1" fill="#7c8cb0"/>
<rect x="951" y="115" width="13" height="1" fill="#7c8cb0"/>
<rect x="988" y="115" width="6" height="1" fill="#7c8cb0"/>
<rect x="1110" y="115" width="6" height="1" fill="#7c8cb0"/>
<rect x="951" y="134" width="13" height="1" fill="#7c8cb0"/>
<rect x="988" y="134" width="6" height="1" fill="#7c8cb0"/>
<rect x="1110" y="134" width="6" height="1" fill="#7c8cb0"/>
<rect x="951" y="152" width="13" height="1" fill="#7c8cb0"/>
<rect x="988" y="152" width="6" height="1" fill="#7c8cb0"/>
<rect x="1110" y="152" width="6" height="1" fill="#7c8cb0"/>
<rect x="951" y="171" width="13" height="1" fill="#7c8cb0"/>
<rect x="988" y="171" width="6" height="1" fill="#7c8cb0"/>
<rect x="1110" y="171" width="6" height="1" fill="#7c8cb0"/>
<rect x="951" y="190" width="13" height="1" fill="#7c8cb0"/>
<rect x="988" y="190" width="6" height="1" fill="#7c8cb0"/>
<rect x="1110" y="190" width="6" height="1" fill="#7c8cb0"/>
<rect x="951" y="209" width="13" height="1" fill="#7c8cb0"/>
<rect x="988" y="209" width="6" height="1" fill="#7c8cb0"/>
<rect x="1110" y="209" width="6" height="1" fill="#7c8cb0"/>
<rect x="951" y="227" width="13" height="1" fill="#7c8cb0"/>
<rect x="988" y="227" width="6" height="1" fill="#7c8cb0"/>
<rect x="1110" y="227" width="6" height="1" fill="#7c8cb0"/>
<rect x="951" y="246" width="13" height="1" fill="#7c8cb0"/>
<rect x="988" y="246" width="6" height="1" fill="#7c8cb0"/>
<rect x="1110" y="246" width="6" height="1" fill="#7c8cb0"/>
<rect x="951" y="264" width="13" height="1" fill="#7c8cb0"/>
<rect x="988" y="264" width="6" height="1" fill="#7c8cb0"/>
<rect x="1110" y="264" width="6" height="1" fill="#7c8cb0"/>
<rect x="951" y="284" width="13" height="1" fill="#7c8cb0"/>
<rect x="988" y="284" width="6" height="1" fill="#7c8cb0"/>
<rect x="1110" y="284" width="6" height="1" fill="#7c8cb0"/>
<rect x="951" y="304" width="13" height="1" fill="#7c8cb0"/>
<rect x="988" y="304" width="6" height="1" fill="#7c8cb0"/>
<rect x="1110" y="304" width="6" height="1" fill="#7c8cb0"/>
<rect x="951" y="322" width="13" height="1" fill="#7c8cb0"/>
<rect x="988" y="322" width="6" height="1" fill="#7c8cb0"/>
<rect x="1110" y="322" width="6" height="1" fill="#7c8cb0"/>
<rect x="951" y="341" width="13" height="1" fill="#7c8cb0"/>
<rect x="988" y="341" width="6" height="1" fill="#7c8cb0"/>
<rect x="1110" y="341" width="6" height="1" fill="#7c8cb0"/>
<rect x="951" y="359" width="13" height="1" fill="#7c8cb0"/>
<rect x="988" y="359" width="6" height="1" fill="#7c8cb0"/>
<rect x="1110" y="359" width="6" height="1" fill="#7c8cb0"/>
<rect x="951" y="378" width="13" height="1" fill="#7c8cb0"/>
<rect x="988" y="378" width="6" height="1" fill="#7c8cb0"/>
<rect x="1110" y="378" width="6" height="1" fill="#7c8cb0"/>
<rect x="951" y="398" width="13" height="1" fill="#7c8cb0"/>
<rect x="988" y="398" width="6" height="1" fill="#7c8cb0"/>
<rect x="1110" y="398" width="6" height="1" fill="#7c8cb0"/>
<rect x="951" y="418" width="13" height="1" fill="#7c8cb0"/>
<rect x="988" y="418" width="6" height="1" fill="#7c8cb0"/>
<rect x="1110" y="418" width="6" height="1" fill="#7c8cb0"/>
<rect x="951" y="436" width="13" height="1" fill="#7c8cb0"/>
<rect x="988" y="436" width="6" height="1" fill="#7c8cb0"/>
<rect x="1110" y="436" width="6" height="1" fill="#7c8cb0"/>
<rect x="951" y="455" width="13" height="1" fill="#7c8cb0"/>
<rect x="988" y="455" width="6" height="1" fill="#7c8cb0"/>
<rect x="1110" y="455" width="6" height="1" fill="#7c8cb0"/>
<rect x="951" y="473" width="13" height="1" fill="#7c8cb0"/>
<rect x="988" y="473" width="6" height="1" fill="#7c8cb0"/>
<rect x="1110" y="473" width="6" height="1" fill="#7c8cb0"/>
<rect x="951" y="492" width="13" height="1" fill="#7c8cb0"/>
<rect x="988" y="492" width="6" height="1" fill="#7c8cb0"/>
<rect x="1110" y="492" width="6" height="1" fill="#7c8cb0"/>
<rect x="951" y="511" width="13" height="1" fill="#7c8cb0"/>
<rect x="988" y="511" width="6" height="1" fill="#7c8cb0"/>
<rect x="1110" y="511" width="6" height="1" fill="#7c8cb0"/>
<rect x="951" y="531" width="13" height="1" fill="#7c8cb0"/>
<rect x="988" y="531" width="6" height="1" fill="#7c8cb0"/>
<rect x="1110" y="531" width="6" height="1" fill="#7c8cb0"/>
<rect x="951" y="550" width="13" height="1" fill="#7c8cb0"/>
<rect x="988" y="550" width="6" height="1" fill="#7c8cb0"/>
<rect x="1110" y="550" width="6" height="1" fill="#7c8cb0"/>
<rect x="951" y="568" width="13" height="1" fill="#7c8cb0"/>
<rect x="988" y="568" width="6" height="1" fill="#7c8cb0"/>
<rect x="1110" y="568" width="6" height="1" fill="#7c8cb0"/>
<line x1="951.5" y1="416" x2="964" y2="512" stroke="#e01010" stroke-width="1" shape-rendering="geometricPrecision"/>
<rect x="963" y="497" width="1" height="15" fill="#e01010"/>
<polygon points="961.5,511 967.5,511 964.5,517" fill="#e01010" shape-rendering="geometricPrecision"/>
</svg>
<div class="gl" style="left:775px;top:82px;padding-top:1px;width:156px;letter-spacing:0.13px;padding-left:2px;">Capping Beam Construction</div>
<div class="gl" style="left:759px;top:176px;padding-top:1px;width:13px;text-align:right;padding-right:1px;">31</div>
<div class="gl" style="left:806px;top:176px;padding-top:1px;width:138px;letter-spacing:0.33px;padding-left:2px;">Install Temporary Works</div>
<div class="gl" style="left:789px;top:271px;width:14px;text-align:right;padding-right:1px;background:transparent;">36</div>
<div class="gl" style="left:929px;top:271px;width:98px;padding-left:2px;">Excavation Works</div>
<div class="gl" style="left:789px;top:291px;width:14px;text-align:right;padding-right:1px;">37</div>
<div class="gl" style="left:928px;top:291px;width:142px;padding-left:2px;">Excavation Works (760M³)</div>
<div class="gl" style="left:893px;top:384px;width:14px;text-align:right;padding-right:1px;background:transparent;">42</div>
<div class="gl" style="left:984px;top:384px;width:90px;padding-left:2px;">Drainage Works</div>
<div class="gl" style="left:893px;top:404px;width:14px;text-align:right;padding-right:1px;">43</div>
<div class="gl" style="left:984px;top:404px;width:130px;padding-left:2px;">Under Ground Drainage</div>
<div class="gl" style="left:947px;top:498px;width:14px;text-align:right;padding-right:1px;">48</div>
<div class="gl" style="left:947px;top:518px;width:14px;text-align:right;padding-right:1px;">49</div>
<div class="gl" style="left:1063px;top:518px;width:166px;letter-spacing:0.27px;padding-left:2px;">Basement Slab (Three Levels)</div>
</body></html>
